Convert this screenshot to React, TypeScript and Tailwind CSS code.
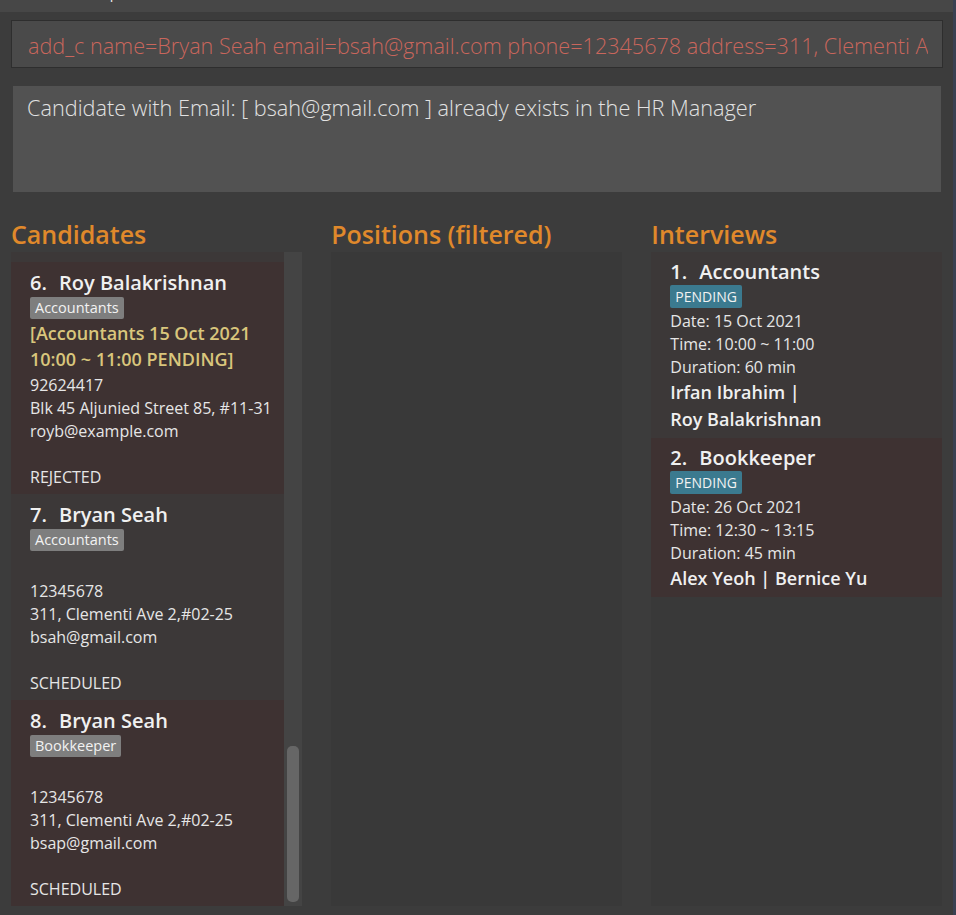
import React from "react";

type Cand = {
  idx: number;
  name: string;
  tag: string;
  interview?: string;
  phone: string;
  address: string;
  email: string;
  status: string;
  red: boolean;
};

const cands: Cand[] = [
  {
    idx: 6,
    name: "Roy Balakrishnan",
    tag: "Accountants",
    interview: "[Accountants 15 Oct 2021 10:00 ~ 11:00 PENDING]",
    phone: "92624417",
    address: "Blk 45 Aljunied Street 85, #11-31",
    email: "royb@example.com",
    status: "REJECTED",
    red: true,
  },
  {
    idx: 7,
    name: "Bryan Seah",
    tag: "Accountants",
    phone: "12345678",
    address: "311, Clementi Ave 2,#02-25",
    email: "bsah@gmail.com",
    status: "SCHEDULED",
    red: false,
  },
  {
    idx: 8,
    name: "Bryan Seah",
    tag: "Bookkeeper",
    phone: "12345678",
    address: "311, Clementi Ave 2,#02-25",
    email: "bsap@gmail.com",
    status: "SCHEDULED",
    red: true,
  },
];

function CandidateCard({ c }: { c: Cand }) {
  return (
    <div
      className={`${c.red ? "bg-[#3e3232]" : "bg-[#3c3838]"} pl-[19px] pr-[6px] pt-[8px] pb-[5px]`}
    >
      <div className="h-[26px] leading-[26px] text-[20px] font-semibold text-[#f0f0f0] whitespace-nowrap flex">
        <span className="w-[29px] inline-block">{c.idx}.</span>
        <span>{c.name}</span>
      </div>
      <div className="mt-[1px] flex">
        <span className="h-[22px] leading-[22px] px-[5px] rounded-[2px] bg-[#7e7e7e] text-[14.5px] text-[#f2f2f2]">
          {c.tag}
        </span>
      </div>
      <div className="min-h-[28px] py-[1px] text-[18px] leading-[26px] font-semibold text-[#d9c67c]">
        {c.interview ?? ""}
      </div>
      <div className="text-[16px] leading-[23px] text-[#e6e6e6] pt-[1px]">
        <div>{c.phone}</div>
        <div>{c.address}</div>
        <div>{c.email}</div>
        <div className="h-[23px]"></div>
        <div>{c.status}</div>
      </div>
    </div>
  );
}

type Iv = {
  idx: number;
  title: string;
  date: string;
  time: string;
  duration: string;
  names: string;
  red: boolean;
};

const ivs: Iv[] = [
  {
    idx: 1,
    title: "Accountants",
    date: "Date: 15 Oct 2021",
    time: "Time: 10:00 ~ 11:00",
    duration: "Duration: 60 min",
    names: "Irfan\u00a0Ibrahim\u00a0| Roy\u00a0Balakrishnan",
    red: false,
  },
  {
    idx: 2,
    title: "Bookkeeper",
    date: "Date: 26 Oct 2021",
    time: "Time: 12:30 ~ 13:15",
    duration: "Duration: 45 min",
    names: "Alex\u00a0Yeoh\u00a0| Bernice\u00a0Yu",
    red: true,
  },
];

function InterviewCard({ v }: { v: Iv }) {
  return (
    <div
      className={`${v.red ? "bg-[#3e3232]" : "bg-[#3c3838]"} pl-[19px] pr-[8px] pt-[7px] pb-[5px]`}
    >
      <div className="h-[26px] leading-[26px] text-[20px] font-semibold text-[#f0f0f0] whitespace-nowrap flex">
        <span className="w-[29px] inline-block">{v.idx}.</span>
        <span>{v.title}</span>
      </div>
      <div className="flex">
        <span className="h-[23px] leading-[23px] px-[5px] rounded-[2px] bg-[#3b7a8f] text-[14px] text-[#f2f2f2]">
          PENDING
        </span>
      </div>
      <div className="text-[16px] leading-[23px] text-[#e6e6e6] pt-[2px]">
        <div>{v.date}</div>
        <div>{v.time}</div>
        <div>{v.duration}</div>
      </div>
      <div className="text-[18px] leading-[27px] font-semibold text-[#f0f0f0]">
        {v.names}
      </div>
    </div>
  );
}

export default function App() {
  return (
    <div
      className="w-[956px] h-[915px] bg-[#3c3c3c] flex overflow-hidden"
      style={{ fontFamily: '"Open Sans", "Noto Sans", sans-serif' }}
    >
      <div className="flex-1 flex flex-col min-w-0">
        {/* menu bar (mostly scrolled out of view) */}
        <div className="h-[12px] bg-[#474747] overflow-hidden shrink-0">
          <div className="mt-[-17px] h-[20px] leading-[20px] text-[14px] text-[#eeeeee] flex">
            <span className="ml-[8px]">File</span>
            <span className="ml-[58px]">Help</span>
          </div>
        </div>

        {/* command box */}
        <div className="mt-[8px] ml-[11px] mr-[10px] h-[48px] bg-[#4a4a4a] border border-[#2e2e2e] overflow-hidden flex items-center pl-[16px] pr-[14px]">
          <div className="whitespace-nowrap overflow-hidden text-[21.6px] font-light text-[#c9665c] leading-[30px] pt-[3px]">
            add_c name=Bryan Seah email=bsah@gmail.com phone=12345678 address=311, Clementi Ave 2,#02-25
          </div>
        </div>

        {/* result box */}
        <div className="mt-[18px] ml-[13px] mr-[12px] h-[106px] bg-[#525252] pl-[14px] pt-[7px]">
          <div className="text-[21.7px] font-light text-[#e2e2e2] leading-[30px]">
            Candidate with Email: [ bsah@gmail.com ] already exists in the HR Manager
          </div>
        </div>

        {/* columns */}
        <div className="mt-[26px] px-[11px] grid grid-cols-3 gap-x-[29.5px] flex-1 pb-[9px] min-h-0">
          {/* Candidates */}
          <div className="flex flex-col min-h-0">
            <div className="h-[32px] leading-[32px] text-[25px] font-semibold text-[#e0892b]">Candidates</div>
            <div className="mt-[2px] flex-1 flex min-h-0 bg-[#383838]">
              <div className="flex-1 overflow-hidden flex flex-col">
                <div className="h-[10px] bg-[#3c3838] shrink-0"></div>
                {cands.map((c) => (
                  <CandidateCard key={c.idx} c={c} />
                ))}
              </div>
              <div className="w-[18px] bg-[#444444] flex flex-col justify-end pb-[4px] items-center">
                <div className="w-[12px] h-[156px] rounded-[5px] bg-[#666666]"></div>
              </div>
            </div>
          </div>

          {/* Positions */}
          <div className="flex flex-col min-h-0">
            <div className="h-[32px] leading-[32px] text-[25px] font-semibold text-[#e0892b] whitespace-nowrap">
              Positions (filtered)
            </div>
            <div className="mt-[2px] flex-1 bg-[#393939]"></div>
          </div>

          {/* Interviews */}
          <div className="flex flex-col min-h-0">
            <div className="h-[32px] leading-[32px] text-[25px] font-semibold text-[#e0892b]">Interviews</div>
            <div className="mt-[2px] flex-1 bg-[#393939] flex flex-col">
              {ivs.map((v) => (
                <InterviewCard key={v.idx} v={v} />
              ))}
            </div>
          </div>
        </div>
      </div>
      <div className="w-[3px] bg-[#3a4152] shrink-0"></div>
    </div>
  );
}
